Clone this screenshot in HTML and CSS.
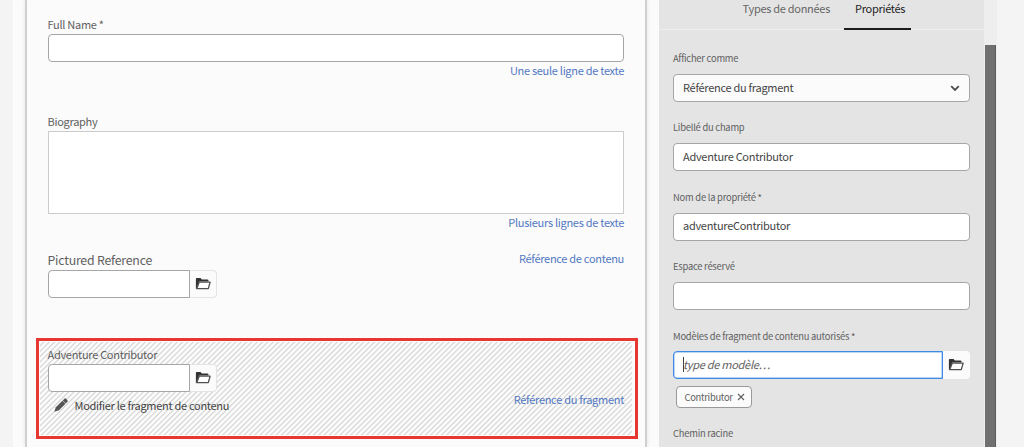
FILE: index.html
```html
<!DOCTYPE html>
<html lang="fr">
<head>
<meta charset="utf-8">
<title>Éditeur de modèle</title>
<link rel="stylesheet" href="styles.css">
</head>
<body>
<svg class="defs" width="0" height="0">
  <symbol id="folder" viewBox="0 0 16 14">
    <path fill="#323232" d="M.9 1.8Q.9 1 1.7 1h3.8l1.4 1.5h5.6q1 0 1 .9V4.6H4.2L1.3 12.2H.9z"/>
    <path fill="#fff" stroke="#505050" stroke-width="1.3" stroke-linejoin="round" d="M4.2 5.2h10.9l-1.8 6.4H1.8z"/>
  </symbol>
</svg>
<div class="app">
  <div class="preview">
    <div class="card">
      <section class="field fullname">
        <label class="label">Full Name *</label>
        <div class="input"></div>
        <span class="type">Une seule ligne de texte</span>
      </section>
      <section class="field biography">
        <label class="label">Biography</label>
        <div class="textarea"></div>
        <span class="type">Plusieurs lignes de texte</span>
      </section>
      <section class="field picture">
        <div class="row">
          <label class="label large">Pictured Reference</label>
          <span class="type">Référence de contenu</span>
        </div>
        <div class="picker"><div class="input short"></div><div class="browse"><svg class="folder"><use href="#folder"/></svg></div></div>
      </section>
      <section class="selected">
        <div class="hatch">
          <div class="reference">
            <label class="label">Adventure Contributor</label>
            <div class="picker"><div class="input short"></div><div class="browse"><svg class="folder"><use href="#folder"/></svg></div></div>
            <div class="edit">
              <svg class="pencil" viewBox="0 0 14 14"><path fill="#555" d="M.3 13.7 1.8 9.2 8.3 2.7l3.2 3.1L5 12.2z"/><path fill="#555" d="M8.7 2.4 10.6.6q.6-.5 1.2 0l1.8 1.8q.4.5 0 1L11.8 5.4z"/></svg>
              <span class="edit-text">Modifier le fragment de contenu</span>
            </div>
          </div>
          <span class="type">Référence du fragment</span>
        </div>
      </section>
    </div>
  </div>
  <aside class="panel">
    <nav class="tabs">
      <span class="tab">Types de données</span>
      <span class="tab active">Propriétés</span>
    </nav>
    <div class="props">
      <div class="prop"><label class="small">Afficher comme</label><div class="input select"><span class="value">Référence du fragment</span><svg class="chevron" viewBox="0 0 10 7"><path d="M1.2 1.2 5 5 8.8 1.2"/></svg></div></div>
      <div class="prop"><label class="small">Libellé du champ</label><div class="input"><span class="value">Adventure Contributor</span></div></div>
      <div class="prop"><label class="small">Nom de la propriété *</label><div class="input"><span class="value">adventureContributor</span></div></div>
      <div class="prop"><label class="small">Espace réservé</label><div class="input"></div></div>
      <div class="prop models"><label class="small">Modèles de fragment de contenu autorisés *</label>
        <div class="picker"><div class="input focus"><i class="caret"></i><em class="value">type de modèle…</em></div><div class="browse"><svg class="folder"><use href="#folder"/></svg></div></div>
        <div class="chip"><span>Contributor</span><svg class="close" viewBox="0 0 8 8"><path d="m1 1 6 6M7 1 1 7"/></svg></div>
      </div>
      <div class="prop last"><label class="small">Chemin racine</label></div>
    </div>
  </aside>
  <div class="scroll"><div class="thumb"></div></div>
</div>
</body>
</html>
```
FILE: styles.css
```css
* { box-sizing: border-box; }
body { margin: 0; height: 447px; overflow: hidden; background: #f4f4f4; color: #444; font: 11px/16px "Noto Sans CJK SC", sans-serif; letter-spacing: -.29px; white-space: nowrap; }
.defs { position: absolute; }
.app { display: flex; height: 447px; padding-left: 13px; }
.preview { width: 646px; background: #fbfbfb; padding: 0 12px; }
.card { height: 447px; border: solid #d0d0d0; border-width: 0 2px; padding-top: 16px; background: #fbfbfb; box-shadow: 0 0 4px rgba(0,0,0,.1); }
.field { display: flex; flex-direction: column; margin: 0 21px 0 20.5px; }
.label { display: block; color: #606060; height: 18px; }
.large { font-size: 12.3px; letter-spacing: -.2px; }
.type { color: #5278c2; align-self: flex-end; }
.input { height: 28px; border: 1px solid #a6a6a6; border-radius: 4px; background: #fff; display: flex; align-items: center; padding: 0 9px; }
.textarea { height: 83px; border: 1px solid #ccc; background: #fff; }
.fullname { height: 97px; }
.biography { height: 138px; }
.picture { height: 87px; }
.row { display: flex; justify-content: space-between; height: 19px; }
.row .label { padding-top: 1px; }
.row .type { margin-top: -1px; align-self: flex-start; }
.picker { display: flex; }
.short { width: 142px; border-radius: 4px 0 0 4px; }
.browse { width: 27px; height: 28px; border: 1px solid #e4e4e4; border-left: 0; border-radius: 0 4px 4px 0; background: #fbfbfb; display: flex; align-items: center; justify-content: center; }
.folder { width: 16px; height: 14px; }
.selected { margin: 0 7px 0 9px; height: 101px; border: 3px solid #e73731; padding: 1px 3px 1px 1px; background: #fbfbfb; }
.hatch { height: 93px; padding: 4px 8px 0 7.5px; display: flex; justify-content: space-between; background: repeating-linear-gradient(135deg, #fbfbfb 0 1.8px, #dadada 2.4px 3.1px, #fbfbfb 3.77px); }
.hatch .type { align-self: flex-start; margin-top: 45px; }
.edit { display: flex; align-items: center; padding: 5px 0 0 6px; gap: 7px; }
.pencil { width: 14px; height: 14px; }
.panel { width: 325px; background: #e4e4e4; }
.tabs { height: 30px; border-bottom: 1px solid #eee; display: flex; justify-content: flex-end; gap: 14px; padding-right: 73px; }
.tab { height: 30px; color: #666; }
.active { width: 67px; padding-left: 11px; color: #252525; border-bottom: 2px solid #1c1c1c; }
.props { padding: 20px 14px 0; }
.prop { height: 69.4px; }
.small { display: block; height: 24px; font-size: 9.4px; letter-spacing: -.23px; color: #606060; }
.value { margin-top: -3px; }
.select { background: #fbfbfb; justify-content: space-between; }
.chevron { width: 10px; height: 7px; fill: none; stroke: #4b4b4b; stroke-width: 1.8; }
.models { height: 97px; }
.last { height: 17px; }
.focus { width: 270px; border-color: #3d8ae4; border-radius: 4px 0 0 4px; box-shadow: inset 0 0 0 .5px #78aef0; }
.focus em { color: #606060; }
.caret { width: 1px; height: 15px; background: #444; margin: -2px -1px 0 0; }
.panel .picker { margin-top: -.5px; }
.panel .browse { border-color: #fbfbfb; }
.chip { width: 76px; height: 22px; margin: 7px 0 0 3px; border: 1px solid #999; border-radius: 4px; background: #fbfbfb; display: flex; align-items: center; justify-content: space-between; padding: 0 6px 1px 7.5px; font-size: 9.4px; color: #606060; }
.close { width: 8px; height: 8px; fill: none; stroke: #606060; stroke-width: 1.1; }
.scroll { width: 13px; background: #eee; padding: 45px 1px 0; }
.thumb { height: 402px; background: #707070; border-right: 1px solid #5c5c5c; }
```
